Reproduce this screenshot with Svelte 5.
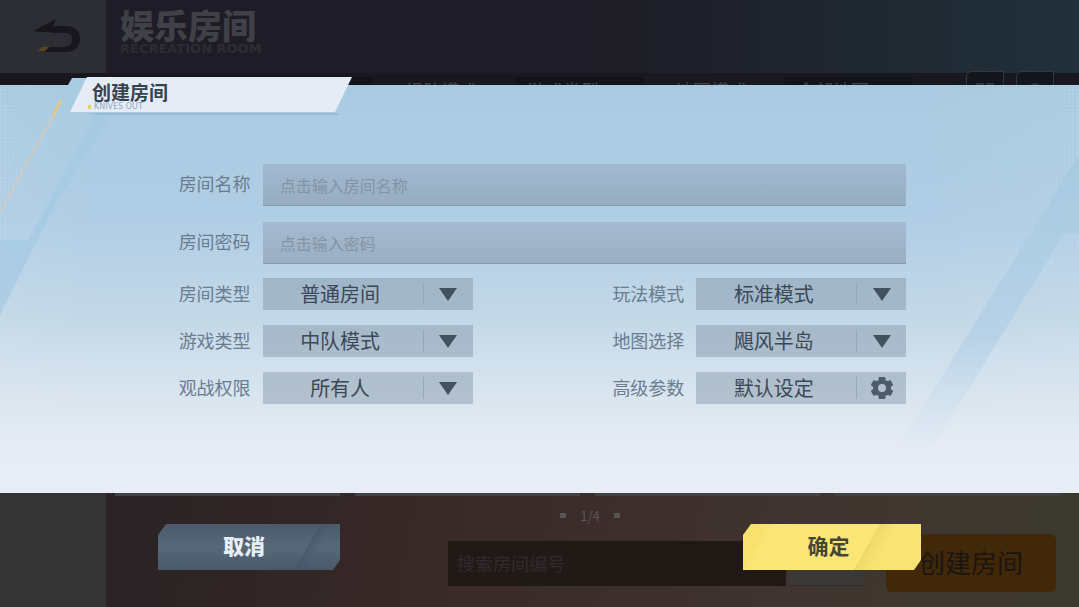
<script>
  let roomName = "";
  let password = "";

  const tabs = ["组队模式", "游戏类型", "地图模式", "全部地图"];
  const cards = [1, 2, 3, 4];

  const settings = [
    { id: "room-type", label: "房间类型", options: ["普通房间"] },
    { id: "play-mode", label: "玩法模式", options: ["标准模式"] },
    { id: "game-type", label: "游戏类型", options: ["中队模式"] },
    { id: "map", label: "地图选择", options: ["飓风半岛"] },
    { id: "watch", label: "观战权限", options: ["所有人"] },
  ];
</script>

<div class="screen">
  <div class="lobby">
    <aside class="side">
      <button class="back" aria-label="返回">
        <svg width="50" height="36" viewBox="0 0 50 36">
          <path d="M1 13 L24 1 L21 8 H34 C43 8 48 13 48 20 C48 29 43 34 34 34 H12 L17 29 H33 C38 28 40 25 40 21 C40 17 38 15 33 15 H22 C16 13 10 15 1 13 Z" fill="#17171d" />
          <path d="M6 33 L10 29 H17 L13 33 Z" fill="#5c4424" />
        </svg>
      </button>
    </aside>
    <div class="main">
      <header class="top">
        <h1>娱乐房间</h1>
        <p>RECREATION ROOM</p>
      </header>
      <nav class="tabs">
        <span class="pill first"></span>
        {#each tabs as tab, i}
          <button class="tab" class:pill={i % 2 === 1}>{tab}</button>
        {/each}
        <div class="tools">
          <button class="tool" aria-label="列表">
            <svg width="18" height="14" viewBox="0 0 18 14"><path d="M0 1h8v5H0zM10 1h8v5h-8z" fill="#34353b" /></svg>
          </button>
          <button class="tool" aria-label="刷新">
            <svg width="18" height="14" viewBox="0 0 18 14"><path d="M4 7a5 5 0 0 1 10 0" fill="none" stroke="#34353b" stroke-width="2" /></svg>
          </button>
        </div>
      </nav>
      <div class="cards">
        {#each cards as card (card)}
          <div class="card"></div>
        {/each}
      </div>
      <div class="pager"><i></i><span>1/4</span><i></i></div>
      <div class="bottom">
        <input class="search" placeholder="搜索房间编号" aria-label="搜索房间编号" />
        <button class="find" aria-label="搜索"></button>
        <button class="create">创建房间</button>
      </div>
    </div>
  </div>

  <form class="dialog" on:submit|preventDefault>
    <section class="panel">
      <svg class="art" viewBox="0 0 1079 408" preserveAspectRatio="none" aria-hidden="true">
        <defs>
          <pattern id="mesh" width="4" height="4" patternUnits="userSpaceOnUse">
            <path d="M0 0h4M0 0v4" stroke="#ffffff" stroke-opacity=".16" fill="none" />
          </pattern>
          <linearGradient id="fade" x1="0" y1="0" x2="0" y2="1">
            <stop offset="0" stop-color="#a5cae0" />
            <stop offset=".6" stop-color="#b3d0e7" />
            <stop offset="1" stop-color="#e2eaf3" stop-opacity=".3" />
          </linearGradient>
          <linearGradient id="meshFade" x1="0" y1="0" x2="1" y2="0">
            <stop offset="0" stop-color="#fff" />
            <stop offset=".09" stop-color="#000" />
            <stop offset=".85" stop-color="#000" />
            <stop offset="1" stop-color="#fff" />
          </linearGradient>
          <mask id="edges"><rect width="1079" height="330" fill="url(#meshFade)" /></mask>
        </defs>
        <rect width="1079" height="330" fill="url(#mesh)" mask="url(#edges)" />
        <path d="M112 0H130L55 120L0 230V155H28Z" fill="#a6cae4" opacity=".75" />
        <path d="M1079 70V149H1064L925 375H890Z" fill="url(#fade)" opacity=".8" />
        <path d="M61 17L0 127" stroke="#d3cbb9" stroke-width="2" stroke-dasharray="5 1" />
        <path d="M61 15L53 31" stroke="#dccb8a" stroke-width="3" />
      </svg>

      <div class="title">
        <svg class="plaque" viewBox="0 0 284 38" aria-hidden="true">
          <path d="M4 1H19V36H0V8Z" fill="#a9cce3" />
          <path d="M18 36H268L272 38H30Z" fill="#8fb2ca" opacity=".6" />
          <path d="M19 0H284L267 35H2Z" fill="#e6ecf5" />
        </svg>
        <h2>创建房间</h2>
        <p>KNIVES OUT</p>
      </div>

      <div class="fields">
        <div class="row">
          <label for="name">房间名称</label>
          <input id="name" class="text" placeholder="点击输入房间名称" bind:value={roomName} />
        </div>
        <div class="row">
          <label for="password">房间密码</label>
          <input id="password" class="text" placeholder="点击输入密码" bind:value={password} />
        </div>
        <div class="settings">
          {#each settings as item}
            <div class="setting">
              <label for={item.id}>{item.label}</label>
              <div class="pick">
                <select id={item.id}>
                  {#each item.options as option}
                    <option>{option}</option>
                  {/each}
                </select>
                <span class="mark">
                  <svg width="18" height="13" viewBox="0 0 18 13"><path d="M0 0H18L9 13Z" fill="#42515f" /></svg>
                </span>
              </div>
            </div>
          {/each}
          <div class="setting">
            <label for="advanced">高级参数</label>
            <div class="pick">
              <button id="advanced" type="button">默认设定</button>
              <span class="mark">
                <svg width="24" height="24" viewBox="0 0 24 24">
                  <path
                    fill="#4c5c6c"
                    fill-rule="evenodd"
                    d="M9 1h6l.7 3.200 1.500.8 3.400-.8 2.600 4.800-2.400 2v2l2.400 2-2.600 4.800-3.400-.8-1.500.8-.7 3.200H9l-.7-3.200-1.500-.8-3.400.8L.8 15l2.400-2v-2L.8 9l2.600-4.800 3.400.8 1.500-.8zM12 8a4 4 0 1 0 0 8a4 4 0 1 0 0-8z"
                  />
                </svg>
              </span>
            </div>
          </div>
        </div>
      </div>
    </section>

    <div class="actions">
      <button type="button" class="action cancel">取消</button>
      <button class="action confirm">确定</button>
    </div>
  </form>
</div>

<style>
  :global(body) {
    margin: 0;
    background: #1d1c24;
  }

  .screen {
    display: grid;
    min-height: 100vh;
    overflow: hidden;
    font-family: "Noto Sans CJK SC", sans-serif;
  }

  .screen * {
    box-sizing: border-box;
  }

  h1, h2, p {
    margin: 0;
  }

  button, input, select {
    margin: 0;
    padding: 0;
    border: 0;
    border-radius: 0;
    font-family: inherit;
  }

  .lobby, .dialog {
    grid-area: 1 / 1;
    min-width: 0;
  }

  /* lobby behind the dialog */
  .lobby {
    display: grid;
    grid-template-columns: 106px 1fr;
    background: linear-gradient(#1d1c25, #1d1c25 50%, transparent 50%),
      linear-gradient(100deg, #2b2325 20%, #392927 45%, #40342f 75%, #3c3a2f);
  }

  .side {
    background: linear-gradient(#2d2d34 73px, #17171d 73px, #17171d 50%, #353536 50%);
  }

  .back {
    display: flex;
    padding: 18px 0 0 32px;
    background: none;
  }

  .main {
    display: flex;
    flex-direction: column;
    min-width: 0;
    background: linear-gradient(90deg, #1e1c26 50%, #1f2830 78%, #20303c) top / 100% 50% no-repeat;
  }

  .top {
    height: 73px;
    padding: 8px 0 0 14px;
  }

  h1 {
    font-size: 34px;
    line-height: 34px;
    font-weight: 900;
    color: #3f4147;
  }

  .top p {
    font: bold 13px/14px "DejaVu Sans", sans-serif;
    color: #2c2c35;
  }

  .tabs {
    display: flex;
    align-items: flex-start;
    gap: 14px;
    height: 48px;
    padding: 4px 25px 0 44px;
    background: #191820;
  }

  .tab {
    width: 114px;
    height: 26px;
    padding: 0 0 0 18px;
    background: none;
    font-size: 18px;
    line-height: 22px;
    text-align: left;
    white-space: nowrap;
    color: #45444b;
  }

  .pill {
    width: 128px;
    height: 26px;
    padding-left: 12px;
    background: #13131a;
  }

  .first {
    width: 223px;
  }

  .tools {
    display: flex;
    gap: 12px;
    margin: -6px 0 0 auto;
  }

  .tool {
    width: 38px;
    height: 38px;
    background: #15161d;
    border: 1px solid #34373d;
    border-radius: 6px 0 0 0;
  }

  .cards {
    flex: 1;
    display: grid;
    grid-template-columns: repeat(4, 1fr);
    gap: 15px;
    padding: 0 19px 0 9px;
  }

  .card {
    background: #424344;
  }

  .pager {
    display: flex;
    justify-content: center;
    align-items: center;
    gap: 14px;
    height: 38px;
    padding-right: 5px;
    font-size: 13px;
    color: #5b5654;
  }

  .pager i {
    width: 6px;
    height: 5px;
    background: #565554;
  }

  .bottom {
    display: flex;
    justify-content: flex-end;
    align-items: center;
    padding: 0 23px 15px;
  }

  .search {
    width: 338px;
    height: 45px;
    padding: 0 9px;
    background: #211916;
    font-size: 18px;
  }

  .search::placeholder {
    color: #302a2f;
  }

  .find {
    width: 74px;
    height: 45px;
    margin: 0 23px 0 3px;
    background: #3b3837;
    border-bottom: 1px solid #2f2b29;
  }

  .create {
    width: 170px;
    height: 58px;
    padding-bottom: 2px;
    background: #402808;
    border-radius: 6px;
    font-size: 26px;
    line-height: 52px;
    color: #1b1512;
  }

  /* create room dialog */
  .dialog {
    position: relative;
    padding-top: 85px;
  }

  .panel {
    position: relative;
    padding: 79px 16% 89px;
    background: linear-gradient(#a9cbe1, #b0cee6 33%, #c3d8e7 57%, #cfdfed 67%, #dbe6ef 78%, #e6ecf5 89%, #e8edf6);
  }

  .art {
    position: absolute;
    inset: 0;
    width: 100%;
    height: 100%;
  }

  .title {
    position: absolute;
    top: -8px;
    left: 68px;
    width: 284px;
    padding: 4px 0 0 24px;
  }

  .plaque {
    position: absolute;
    inset: 0;
    width: 284px;
    height: 38px;
  }

  h2 {
    position: relative;
    font-size: 19px;
    line-height: 21px;
    font-weight: 700;
    color: #354351;
  }

  .title p {
    position: relative;
    padding-left: 2px;
    font: 8px/10px "DejaVu Sans", sans-serif;
    color: #93a9bf;
  }

  .title p::before {
    content: "";
    position: absolute;
    top: 3px;
    left: -4px;
    width: 3px;
    height: 4px;
    background: #e7cf6d;
  }

  .fields {
    position: relative;
    margin-left: 6px;
  }

  .row {
    display: grid;
    grid-template-columns: 84px 1fr;
    align-items: center;
  }

  .row + .row {
    margin-top: 16px;
  }

  label {
    font-size: 18px;
    line-height: 30px;
    color: #6a7d8f;
  }

  .row label {
    padding-bottom: 4px;
  }

  .text {
    width: 100%;
    height: 42px;
    padding: 0 17px;
    background: linear-gradient(rgba(148, 160, 184, 0.45), rgba(124, 140, 158, 0.5));
    border-bottom: 1px solid #8399ad;
    font-size: 16px;
    color: #42505f;
  }

  .text::placeholder {
    color: #8293a4;
  }

  .settings {
    display: grid;
    grid-template-columns: 294px 294px;
    justify-content: space-between;
    row-gap: 15px;
    margin-top: 14px;
  }

  .setting {
    display: grid;
    grid-template-columns: 84px 1fr;
    height: 32px;
  }

  .pick {
    display: grid;
    background: rgba(116, 134, 152, 0.38);
  }

  .pick select, .pick button {
    grid-area: 1 / 1;
    appearance: none;
    height: 32px;
    padding: 0 55px 0 0;
    background: none;
    font-size: 20px;
    line-height: 32px;
    text-align: center;
    text-align-last: center;
    color: #3b4857;
  }

  .mark {
    grid-area: 1 / 1;
    justify-self: end;
    align-self: center;
    display: flex;
    justify-content: center;
    align-items: center;
    width: 50px;
    height: 22px;
    border-left: 1px solid #93a8ba;
    pointer-events: none;
  }

  .actions {
    display: flex;
    justify-content: space-between;
    padding: 31px 158px 0;
  }

  .action {
    height: 46px;
    padding-bottom: 4px;
    font-size: 21px;
    line-height: 42px;
    clip-path: polygon(8px 0, 100% 0, 100% 36px, calc(100% - 7px) 100%, 0 100%, 0 11px);
  }

  .cancel {
    width: 182px;
    padding-right: 10px;
    background: linear-gradient(120deg, transparent 78%, rgba(68, 84, 100, 0.6) 78%, transparent 84%),
      linear-gradient(#4a5a6a, #576878 50%, #495969);
    font-weight: 900;
    color: #e8eef7;
  }

  .confirm {
    width: 178px;
    padding-right: 7px;
    background: linear-gradient(120deg, #f8e26d 14%, #fae677 14%, #fae677 67%, #efd866 67%, #f9e473 76%);
    font-weight: 700;
    color: #454637;
  }
</style>
